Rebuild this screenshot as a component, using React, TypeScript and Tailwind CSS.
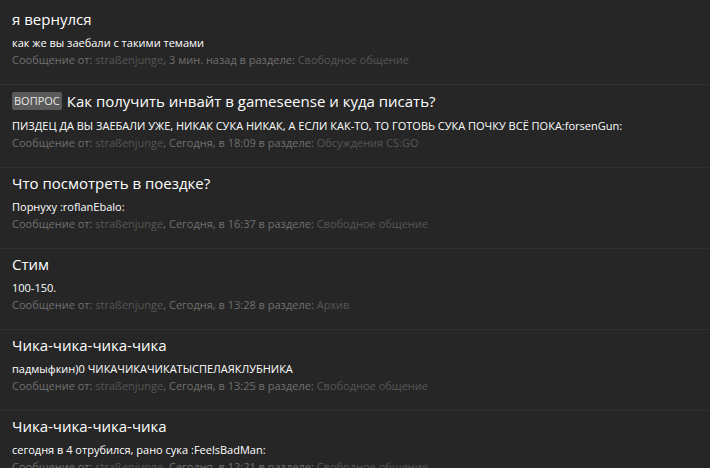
const POSTS = [
  {
    badge: "",
    title: "я вернулся",
    body: "как же вы заебали с такими темами",
    when: "3 мин. назад",
    forum: "Свободное общение",
  },
  {
    badge: "Вопрос",
    title: "Как получить инвайт в gameseense и куда писать?",
    body: "ПИЗДЕЦ ДА ВЫ ЗАЕБАЛИ УЖЕ, НИКАК СУКА НИКАК, А ЕСЛИ КАК-ТО, ТО ГОТОВЬ СУКА ПОЧКУ ВСЁ ПОКА:forsenGun:",
    when: "Сегодня, в 18:09",
    forum: "Обсуждения CS:GO",
  },
  {
    badge: "",
    title: "Что посмотреть в поездке?",
    body: "Порнуху :roflanEbalo:",
    when: "Сегодня, в 16:37",
    forum: "Свободное общение",
  },
  {
    badge: "",
    title: "Стим",
    body: "100-150.",
    when: "Сегодня, в 13:28",
    forum: "Архив",
  },
  {
    badge: "",
    title: "Чика-чика-чика-чика",
    body: "падмыфкин)0 ЧИКАЧИКАЧИКАТЫСПЕЛАЯКЛУБНИКА",
    when: "Сегодня, в 13:25",
    forum: "Свободное общение",
  },
  {
    badge: "",
    title: "Чика-чика-чика-чика",
    body: "сегодня в 4 отрубился, рано сука :FeelsBadMan:",
    when: "Сегодня, в 12:21",
    forum: "Свободное общение",
  },
];

function ResultRow({ post }: { post: (typeof POSTS)[number] }) {
  return (
    <li className="border-b border-[#313131] px-3 pb-[16px] pt-[4px]">
      <h3
        className={
          post.badge
            ? "flex h-[24px] items-center text-[15px] leading-[22px] text-white"
            : "flex h-[22px] items-center text-[15px] leading-[22px] text-white"
        }
      >
        {post.badge && (
          <span className="mr-[5px] rounded-[2px] bg-[#5a5a5a] px-[2px] text-[11px] uppercase leading-[18px] text-[#e6e6e6]">
            {post.badge}
          </span>
        )}
        <a href="#">{post.title}</a>
      </h3>
      <div className="mt-[5px] text-[11px] leading-[16px] text-white">{post.body}</div>
      <div className="mt-[1px] text-[11px] leading-[16px] text-[#707070]">
        Сообщение от: <a href="#" className="text-[#565656]">straßenjunge</a>, {post.when} в
        разделе: <a href="#" className="text-[#565656]">{post.forum}</a>
      </div>
    </li>
  );
}

export default function App() {
  return (
    <div className="h-[468px] overflow-hidden bg-[#262626] pt-[4px] font-['Open_Sans',sans-serif]">
      <ol>
        {POSTS.map((p, i) => (
          <ResultRow key={i} post={p} />
        ))}
      </ol>
    </div>
  );
}
